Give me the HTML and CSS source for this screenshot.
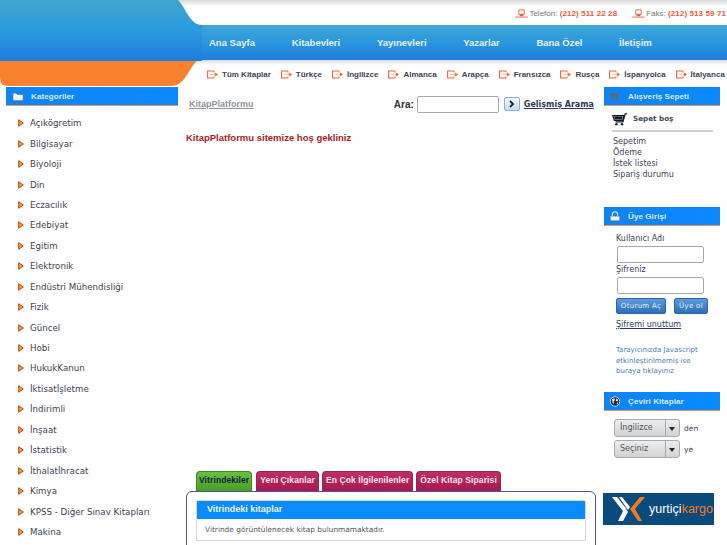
FILE: index.html
```html
<!DOCTYPE html>
<html lang="tr">
<head>
    <meta charset="UTF-8">
    <title>KitapPlatformu</title>
    <link rel="stylesheet" href="styles.css">
</head>
<body>
    <svg class="icon-defs" width="0" height="0">
        <symbol id="go" viewBox="0 0 11 9">
            <path d="M7 1H.6v7H7" fill="none" stroke="#f4603c" stroke-width="1.100"/>
            <path d="M7 1v1.500M7 8V6.500" fill="none" stroke="#f4603c"/>
            <path d="M3.500 4.500H8M8 2.800l3 1.700-3 1.700z" fill="#f4603c" stroke="#f48a3c" stroke-width=".5"/>
        </symbol>
        <symbol id="phone" viewBox="0 0 14 10">
            <path d="M4 1h6v5H4zM0 9h14" fill="none" stroke="#f0583c" stroke-width="1"/>
            <path d="M5 6h4v2H5z" fill="#f0583c"/>
        </symbol>
        <symbol id="bullet" viewBox="0 0 6 8">
            <path d="M.7.7 5.300 4 .7 7.300z" fill="#f6a623" stroke="#b5431a"/>
        </symbol>
        <symbol id="cart" viewBox="0 0 20 16">
            <path d="M19 1h-2.500l-2.800 10H4.500M1 3h14l-1.800 6H3z" fill="none" stroke="currentColor" stroke-width="1.500"/>
            <path d="M2.500 4h11l-1 4h-9z" fill="currentColor"/>
            <circle cx="5.500" cy="13.800" r="1.500" fill="currentColor"/>
            <circle cx="12.500" cy="13.800" r="1.500" fill="currentColor"/>
        </symbol>
    </svg>

    <header class="header">
        <svg class="header-shape" viewBox="0 0 202 87" width="202" height="87">
            <defs>
                <linearGradient id="shape-blue" x1="0" y1="0" x2="0" y2="1">
                    <stop offset="0" stop-color="#3fa5cc"/>
                    <stop offset=".5" stop-color="#2b9ade"/>
                    <stop offset="1" stop-color="#1f7cdc"/>
                </linearGradient>
            </defs>
            <path d="M0 0H178C186 8 190 25 202 25V61H0z" fill="url(#shape-blue)"/>
            <path d="M0 61H197C190 66 185 86 172 86H8Q0 86 0 78z" fill="#f9812d"/>
        </svg>
        <div class="top-strip">
            <span class="contact"><svg class="contact-icon"><use href="#phone"/></svg>Telefon: <b>(212) 511 22 28</b></span>
            <span class="contact"><svg class="contact-icon"><use href="#phone"/></svg>Faks: <b>(212) 513 59 71</b></span>
        </div>
        <nav class="main-nav">
            <a>Ana Sayfa</a>
            <a>Kitabevleri</a>
            <a>Yayınevleri</a>
            <a>Yazarlar</a>
            <a>Bana Özel</a>
            <a>İletişim</a>
        </nav>
        <nav class="lang-nav">
            <a><svg class="go-icon"><use href="#go"/></svg>Tüm Kitaplar</a>
            <a><svg class="go-icon"><use href="#go"/></svg>Türkçe</a>
            <a><svg class="go-icon"><use href="#go"/></svg>İngilizce</a>
            <a><svg class="go-icon"><use href="#go"/></svg>Almanca</a>
            <a><svg class="go-icon"><use href="#go"/></svg>Arapça</a>
            <a><svg class="go-icon"><use href="#go"/></svg>Fransızca</a>
            <a><svg class="go-icon"><use href="#go"/></svg>Rusça</a>
            <a><svg class="go-icon"><use href="#go"/></svg>İspanyolca</a>
            <a><svg class="go-icon"><use href="#go"/></svg>İtalyanca</a>
        </nav>
    </header>

    <div class="page">
        <aside class="left-col">
            <div class="panel-title">
                <svg class="panel-icon" viewBox="0 0 14 12"><path d="M1 2h4l1 1.500h7V11H1z" fill="#eef2f6" stroke="#5a6a80"/></svg>
                Kategoriler
            </div>
            <ul class="cat-list">
                <li><svg class="bullet"><use href="#bullet"/></svg>Açıkögretim</li>
                <li><svg class="bullet"><use href="#bullet"/></svg>Bilgisayar</li>
                <li><svg class="bullet"><use href="#bullet"/></svg>Biyoloji</li>
                <li><svg class="bullet"><use href="#bullet"/></svg>Din</li>
                <li><svg class="bullet"><use href="#bullet"/></svg>Eczacılık</li>
                <li><svg class="bullet"><use href="#bullet"/></svg>Edebiyat</li>
                <li><svg class="bullet"><use href="#bullet"/></svg>Egitim</li>
                <li><svg class="bullet"><use href="#bullet"/></svg>Elektronik</li>
                <li><svg class="bullet"><use href="#bullet"/></svg>Endüstri Mühendisliği</li>
                <li><svg class="bullet"><use href="#bullet"/></svg>Fizik</li>
                <li><svg class="bullet"><use href="#bullet"/></svg>Güncel</li>
                <li><svg class="bullet"><use href="#bullet"/></svg>Hobi</li>
                <li><svg class="bullet"><use href="#bullet"/></svg>HukukKanun</li>
                <li><svg class="bullet"><use href="#bullet"/></svg>İktisatİşletme</li>
                <li><svg class="bullet"><use href="#bullet"/></svg>İndirimli</li>
                <li><svg class="bullet"><use href="#bullet"/></svg>İnşaat</li>
                <li><svg class="bullet"><use href="#bullet"/></svg>İstatistik</li>
                <li><svg class="bullet"><use href="#bullet"/></svg>İthalatİhracat</li>
                <li><svg class="bullet"><use href="#bullet"/></svg>Kimya</li>
                <li><svg class="bullet"><use href="#bullet"/></svg>KPSS - Diğer Sınav Kitapları</li>
                <li><svg class="bullet"><use href="#bullet"/></svg>Makina</li>
            </ul>
        </aside>

        <main class="center-col">
            <div class="search-row">
                <a class="crumb">KitapPlatformu</a>
                <div class="search">
                    <label for="q">Ara:</label>
                    <input class="text-input search-input" type="text" id="q">
                    <button class="search-go" type="button">
                        <svg viewBox="0 0 8 8" width="8" height="8"><path d="M2 1l3 3-3 3" fill="none" stroke="#10203c" stroke-width="1.800"/></svg>
                    </button>
                    <a class="adv-link">Gelişmiş Arama</a>
                </div>
            </div>
            <h1 class="welcome">KitapPlatformu sitemize hoş gekliniz</h1>
            <div class="tabs">
                <a class="tab tab-active">Vitrindekiler</a>
                <a class="tab">Yeni Çıkanlar</a>
                <a class="tab">En Çok İlgilenilenler</a>
                <a class="tab">Özel Kitap Siparisi</a>
            </div>
            <section class="tab-body">
                <div class="box">
                    <div class="box-title">Vitrindeki kitaplar</div>
                    <div class="box-text">Vitrinde görüntülenecek kitap bulunmamaktadır.</div>
                </div>
            </section>
        </main>

        <aside class="right-col">
            <div class="panel-title panel-title-right">
                <svg class="panel-icon panel-icon-cart"><use href="#cart"/></svg>
                Alışveriş Sepeti
            </div>
            <div class="cart-empty">
                <svg class="cart-icon"><use href="#cart"/></svg>Sepet boş
            </div>
            <ul class="cart-links">
                <li>Sepetim</li>
                <li>Ödeme</li>
                <li>İstek listesi</li>
                <li>Sipariş durumu</li>
            </ul>

            <div class="panel-title panel-title-right panel-login">
                <svg class="panel-icon" viewBox="0 0 14 12"><path d="M4 6V3.500a3 3 0 0 1 6 0V6" fill="none" stroke="#e8edf2" stroke-width="1.300"/><path d="M1.500 5.500h11V11h-11z" fill="#eef2f6" stroke="#5a6a80" stroke-width=".7"/></svg>
                Üye Girişi
            </div>
            <form class="login">
                <label for="user">Kullanıcı Adı</label>
                <input class="text-input login-input" type="text" id="user">
                <label for="pass">Şifreniz</label>
                <input class="text-input login-input" type="password" id="pass">
                <div class="login-buttons">
                    <button class="blue-btn btn-login" type="button">Oturum Aç</button>
                    <button class="blue-btn btn-signup" type="button">Üye ol</button>
                </div>
                <a class="forgot">Şifremi unuttum</a>
            </form>
            <p class="js-note">Tarayıcınızda Javascript etkinleştirilmemiş ise buraya tıklayınız</p>

            <div class="panel-title panel-title-right panel-translate">
                <svg class="panel-icon" viewBox="0 0 14 14"><circle cx="7" cy="7" r="6" fill="#1c2c4a" stroke="#e8edf2"/><path d="M3 4l3-1 1 2-2 2 1 3-2-1zM9 3l2 2-1 2-2-1zM9 9l2-1-1 3z" fill="#e8edf2"/></svg>
                Çeviri Kitaplar
            </div>
            <div class="translate-row">
                <div class="select-box">
                    <span class="select-text">İngilizce</span><span class="select-arrow"></span>
                </div>
                <span>den</span>
            </div>
            <div class="translate-row">
                <div class="select-box">
                    <span class="select-text">Seçiniz</span><span class="select-arrow"></span>
                </div>
                <span>ye</span>
            </div>

            <div class="cargo-logo">
                <svg viewBox="0 0 36 28" width="36" height="28">
                    <path d="M1 2h5l8 10 3 5-5 9H7l5-10z" fill="#fff"/>
                    <path d="M8 2h3l8 10-2 3z" fill="#fff"/>
                    <path d="M19 14 29 2h5L24 14l7 12h-4z" fill="#f47a20"/>
                </svg>
                <span class="cargo-name">yurtiçi<span class="cargo-accent">kargo</span></span>
            </div>
        </aside>
    </div>
</body>
</html>
```

FILE: styles.css
```css
html, body {
    margin: 0;
    padding: 0;
    height: 545px;
    overflow: hidden;
}
body {
    font-family: "DejaVu Sans", sans-serif;
    font-size: 9px;
    color: #3c4454;
    background-color: #fff;
}
a {
    cursor: pointer;
}
.icon-defs {
    display: block;
    height: 0;
}

/* header */
.header {
    position: relative;
    height: 87px;
}
.header-shape {
    position: absolute;
    left: 0;
    top: 0;
}
.top-strip {
    height: 25px;
    box-sizing: border-box;
    padding: 2px 1px 0 0;
    display: flex;
    justify-content: flex-end;
    align-items: center;
    gap: 15px;
    white-space: nowrap;
    font-family: "Liberation Sans", sans-serif;
    font-size: 8px;
    color: #777;
    background: linear-gradient(#d8dadc 0, #fff 6px);
}
.contact b {
    color: #f0583c;
    letter-spacing: .1px;
}
.contact-icon {
    width: 13px;
    height: 9px;
    margin-right: 1px;
    vertical-align: -2px;
}
.main-nav {
    height: 35px;
    box-sizing: border-box;
    padding-left: 209px;
    display: flex;
    align-items: center;
    gap: 36.700px;
    background: linear-gradient(#3fa6d6, #2a97de 50%, #1f7edc);
    font-family: "Liberation Sans", sans-serif;
    font-size: 9.500px;
    font-weight: bold;
    color: #e8f2fa;
}
.lang-nav {
    height: 26px;
    box-sizing: border-box;
    padding: 2px 0 0 207px;
    display: flex;
    align-items: center;
    gap: 9.900px;
    white-space: nowrap;
    background: linear-gradient(#d8dadc 0, #fff 5px);
    font-family: "Liberation Sans", sans-serif;
    font-size: 8px;
    font-weight: bold;
    color: #3c4454;
}
.go-icon {
    width: 11px;
    height: 9px;
    margin-right: 4px;
    vertical-align: -2px;
}

/* columns */
.page {
    display: grid;
    grid-template-columns: 186px 410px 123px;
    column-gap: 0;
}
.left-col {
    padding-left: 6px;
}
.center-col {
    display: flex;
    flex-direction: column;
}
.right-col {
    padding-left: 8px;
}
.panel-title {
    height: 19px;
    box-sizing: border-box;
    width: 172px;
    display: flex;
    align-items: center;
    gap: 7px;
    padding-left: 6px;
    background: linear-gradient(90deg, #0d84f4, #0a8aff);
    border-bottom: 1px solid #f0905c;
    font-family: "Liberation Sans", sans-serif;
    font-size: 8px;
    font-weight: bold;
    letter-spacing: .1px;
    color: #dcecff;
}
.panel-icon {
    width: 12px;
    height: 11px;
    flex: none;
}
.panel-icon-cart {
    color: #5a6a78;
}
.panel-title-right {
    width: 116px;
    padding-left: 5px;
    gap: 7px;
}

/* categories */
.cat-list {
    list-style: none;
    margin: 7px 0 0;
    padding: 0 0 0 12px;
    font-size: 8.700px;
}
.cat-list li {
    height: 20.450px;
    display: flex;
    align-items: center;
    white-space: nowrap;
}
.bullet {
    width: 6px;
    height: 8px;
    margin-right: 6px;
}

/* center */
.search-row {
    height: 34px;
    display: flex;
    align-items: center;
    justify-content: space-between;
}
.crumb {
    margin-left: 3px;
    font-weight: bold;
    font-family: "Liberation Sans", sans-serif;
    font-size: 9px;
    color: #8f9499;
    text-decoration: underline;
}
.search {
    display: flex;
    align-items: center;
    margin-right: 2px;
    white-space: nowrap;
}
.search label {
    font-family: "Liberation Sans", sans-serif;
    font-weight: bold;
    font-size: 10px;
    color: #333;
    margin-right: 3px;
}
.text-input {
    box-sizing: border-box;
    border: 1px solid #a8a8a8;
    border-radius: 2px;
    background: #fff;
    padding: 0;
}
.search-input {
    width: 82px;
    height: 17px;
    margin-right: 5px;
}
.search-go {
    width: 16px;
    height: 14px;
    padding: 0;
    margin-right: 4px;
    display: flex;
    align-items: center;
    justify-content: center;
    border: 1px solid #8cb0d0;
    border-radius: 2px;
    background: linear-gradient(#f4f8fc, #c8dcf0);
}
.adv-link {
    font-weight: bold;
    font-size: 8px;
    color: #2c3c58;
    text-decoration: underline;
}
.welcome {
    margin: 11px 0 0;
    height: 12px;
    line-height: 12px;
    font-family: "Liberation Sans", sans-serif;
    font-size: 9.500px;
    font-weight: bold;
    color: #a81c28;
}
.tabs {
    display: flex;
    gap: 3px;
    margin: 327px 0 0 10px;
    height: 20px;
    font-family: "Liberation Sans", sans-serif;
    font-size: 8.500px;
    font-weight: bold;
    letter-spacing: .1px;
}
.tab {
    box-sizing: border-box;
    height: 20px;
    padding: 0 3px;
    line-height: 17px;
    white-space: nowrap;
    color: #f6e8ee;
    background: linear-gradient(#c22c62, #a81850);
    border: 1px solid #8c2c4c;
    border-bottom: 0;
    border-radius: 4px 4px 0 0;
}
.tab-active {
    padding: 0 2px;
    margin-right: 1px;
    color: #14204c;
    background: linear-gradient(#68c040, #48a020);
    border-color: #3c8c20;
}
.tab-body {
    box-sizing: border-box;
    height: 80px;
    padding: 8px 9px;
    border: 1px solid #4c54a0;
    border-radius: 6px 6px 0 0;
}
.box {
    border: 1px solid #d4d8dc;
    border-radius: 3px 3px 0 0;
}
.box-title {
    height: 18px;
    line-height: 17px;
    padding-left: 10px;
    background: #0a8cff;
    color: #e8f4ff;
    font-family: "Liberation Sans", sans-serif;
    font-size: 9px;
    font-weight: bold;
}
.box-text {
    height: 21px;
    line-height: 21px;
    padding-left: 8px;
    font-size: 7.400px;
    color: #555;
}

/* right */
.cart-empty {
    display: flex;
    align-items: flex-start;
    width: 101px;
    margin: 7px 0 0 8px;
    height: 17px;
    border-bottom: 2px solid #d0d0d0;
    font-size: 7.200px;
    line-height: 11px;
    font-weight: bold;
    color: #444c58;
}
.cart-icon {
    width: 16px;
    height: 13px;
    margin-right: 5px;
    color: #141c28;
}
.cart-links {
    list-style: none;
    margin: 3.500px 0 0 9px;
    padding: 0;
    font-size: 8px;
    line-height: 11px;
}
.panel-login {
    margin-top: 27.500px;
}
.login {
    display: flex;
    flex-direction: column;
    align-items: flex-start;
    padding: 7px 0 0 12px;
    font-size: 8px;
}
.login label {
    line-height: 11px;
}
.login-input {
    width: 87px;
    height: 17px;
    margin: 2px 0 1px 1px;
}
.login-buttons {
    display: flex;
    gap: 8px;
    margin-top: 3px;
}
.blue-btn {
    height: 16px;
    padding: 0;
    border: 1px solid #2c64a8;
    border-radius: 2px;
    background: linear-gradient(#5c9cdc, #2c70b8);
    font-family: "DejaVu Sans", sans-serif;
    font-size: 7px;
    letter-spacing: .3px;
    color: #e4eef8;
}
.btn-login {
    width: 50px;
}
.btn-signup {
    width: 34px;
}
.forgot {
    margin-top: 6px;
    text-decoration: underline;
    color: #2c3c58;
}
.js-note {
    width: 92px;
    margin: 16px 0 0 12px;
    font-size: 7px;
    line-height: 10.500px;
    color: #4c7cac;
}
.panel-translate {
    margin-top: 15.500px;
}
.translate-row {
    display: flex;
    align-items: center;
    gap: 4px;
    margin: 0 0 3px 10px;
    font-size: 7.500px;
}
.panel-translate + .translate-row {
    margin-top: 8px;
}
.select-box {
    box-sizing: border-box;
    width: 66px;
    height: 18px;
    display: flex;
    border: 1px solid #a8aaac;
    border-radius: 3px;
    background: linear-gradient(#eceef0, #d0d2d4);
    font-size: 8px;
    line-height: 16px;
    color: #505458;
}
.select-text {
    flex: 1;
    padding-left: 5px;
}
.select-arrow {
    width: 13px;
    position: relative;
    border-left: 1px solid #a8aaac;
}
.select-arrow::after {
    content: "";
    position: absolute;
    left: 3px;
    top: 7px;
    border: 3.500px solid transparent;
    border-top: 4px solid #222;
    border-bottom: 0;
}
.cargo-logo {
    box-sizing: border-box;
    width: 111px;
    height: 32px;
    margin: 35px 0 0 -1px;
    display: flex;
    align-items: center;
    padding-left: 8px;
    background: #0b4a7c;
    white-space: nowrap;
}
.cargo-name {
    margin-left: 2px;
    font-family: "Liberation Sans", sans-serif;
    font-size: 12.500px;
    color: #fff;
}
.cargo-accent {
    color: #f47a20;
}
```
